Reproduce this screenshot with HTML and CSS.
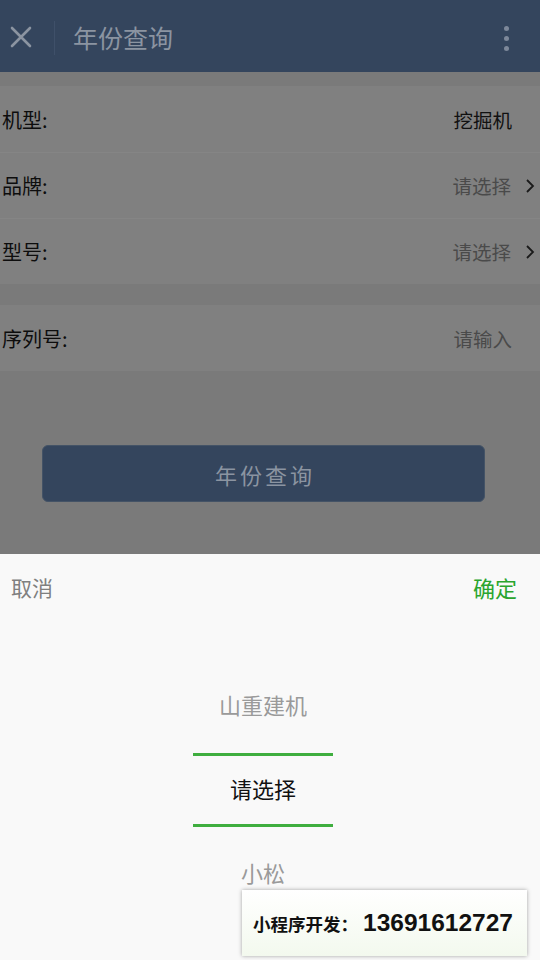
FILE: index.html
```html
<!DOCTYPE html>
<html lang="zh">
<head>
<meta charset="utf-8">
<title>年份查询</title>
<link rel="stylesheet" href="styles.css">
</head>
<body>
<div class="page">
  <header class="nav">
    <svg class="close" width="22" height="22" viewBox="0 0 22 22"><path d="M2 2 L20 20 M20 2 L2 20" stroke="#8b94a1" stroke-width="2.6" stroke-linecap="round"/></svg>
    <span class="nav-div"></span>
    <span class="nav-title">年份查询</span>
    <span class="dots"><i></i><i></i><i></i></span>
  </header>

  <section class="group first">
    <div class="row"><span class="label">机型:</span><span class="value dark">挖掘机</span></div>
    <div class="row"><span class="label">品牌:</span><span class="value arrow">请选择</span><svg class="chev" width="10" height="16" viewBox="0 0 10 16"><path d="M2 2 L8 8 L2 14" fill="none" stroke="#1a1a1a" stroke-width="1.8"/></svg></div>
    <div class="row"><span class="label">型号:</span><span class="value arrow">请选择</span><svg class="chev" width="10" height="16" viewBox="0 0 10 16"><path d="M2 2 L8 8 L2 14" fill="none" stroke="#1a1a1a" stroke-width="1.8"/></svg></div>
  </section>

  <section class="group second">
    <div class="row"><span class="label">序列号:</span><span class="value">请输入</span></div>
  </section>

  <div class="btn-wrap"><div class="btn">年份查询</div></div>
</div>

<div class="sheet">
  <div class="sheet-head"><span class="cancel">取消</span><span class="ok">确定</span></div>
  <div class="picker">
    <div class="item">山重建机</div>
    <div class="item sel">请选择</div>
    <div class="item">小松</div>
    <div class="band"></div>
  </div>
  <div class="promo"><span class="promo-cn">小程序开发：</span><span class="promo-num">13691612727</span></div>
</div>
</body>
</html>
```

FILE: styles.css
```css
html, body {
  margin: 0;
  padding: 0;
}
body {
  width: 540px;
  height: 960px;
  overflow: hidden;
  background: #7a7a7a;
  font-family: "Noto Sans CJK SC", "Noto Sans", sans-serif;
  position: relative;
}
.page {
  display: flex;
  flex-direction: column;
}
.nav {
  height: 72px;
  background: #34455d;
  display: flex;
  align-items: center;
  padding-left: 10px;
  box-sizing: border-box;
}
.close {
  display: block;
  flex: none;
  margin-top: 2px;
}
.nav-div {
  width: 1px;
  height: 34px;
  background: #3f5069;
  margin-left: 22px;
  margin-top: 4px;
}
.nav-title {
  margin-left: 18px;
  margin-top: 3px;
  font-size: 25px;
  color: #8b94a1;
  line-height: 1;
}
.dots {
  margin-left: auto;
  margin-right: 31px;
  margin-top: 4px;
  display: flex;
  flex-direction: column;
  gap: 5px;
}
.dots i {
  display: block;
  width: 5px;
  height: 5px;
  border-radius: 50%;
  background: #7d889a;
}
.group {
  background: #808080;
  display: flex;
  flex-direction: column;
}
.group.first {
  margin-top: 14px;
}
.group.second {
  margin-top: 21px;
}
.row {
  height: 66px;
  display: flex;
  align-items: center;
  padding-left: 2px;
  box-sizing: border-box;
}
.group.first .row + .row {
  border-top: 1px solid #858585;
}
.label {
  font-size: 20px;
  color: #0d0d0d;
}
.value {
  margin-left: auto;
  font-size: 19.5px;
  color: #4a4a4a;
  margin-right: 28px;
}
.value.dark {
  color: #111111;
}
.value.arrow {
  margin-right: 14px;
}
.chev {
  display: block;
  margin-right: 5px;
}
.btn-wrap {
  padding: 74px 55px 0 42px;
}
.btn {
  height: 57px;
  background: #34455d;
  border-radius: 6px;
  border: 1px solid #445366;
  box-sizing: border-box;
  display: flex;
  align-items: center;
  justify-content: center;
  font-size: 22px;
  letter-spacing: 3px;
  color: #8b94a1;
  padding-left: 3px;
}
.sheet {
  position: absolute;
  left: 0;
  right: 0;
  bottom: 0;
  height: 406px;
  background: #f9f9f9;
  display: flex;
  flex-direction: column;
}
.sheet-head {
  height: 66px;
  display: flex;
  align-items: center;
  justify-content: space-between;
  padding: 0 23px 0 11px;
}
.cancel {
  font-size: 21px;
  color: #7f7f7f;
}
.ok {
  font-size: 22px;
  color: #2aa52e;
}
.picker {
  position: relative;
  margin-top: 42px;
  margin-right: 14px;
  display: flex;
  flex-direction: column;
  align-items: center;
}
.item {
  height: 84px;
  display: flex;
  align-items: center;
  justify-content: center;
  font-size: 22px;
  color: #9a9a9a;
}
.item.sel {
  color: #111111;
}
.band {
  position: absolute;
  left: 50%;
  top: 91px;
  width: 140px;
  height: 74px;
  margin-left: -70px;
  border-top: 3px solid #3fae3f;
  border-bottom: 3px solid #3fae3f;
  box-sizing: border-box;
}
.promo {
  position: absolute;
  left: 242px;
  top: 336px;
  width: 285px;
  height: 66px;
  box-sizing: border-box;
  background: linear-gradient(#ffffff, #f3f9ee);
  box-shadow: 0 0 4px rgba(0,0,0,0.35);
  display: flex;
  align-items: center;
  padding-left: 11px;
  white-space: nowrap;
}
.promo-cn {
  font-size: 17.5px;
  font-weight: bold;
  color: #111;
}
.promo-num {
  font-family: "Liberation Sans", Arial, sans-serif;
  font-size: 24.5px;
  font-weight: bold;
  color: #111;
  margin-left: 5px;
}
```
